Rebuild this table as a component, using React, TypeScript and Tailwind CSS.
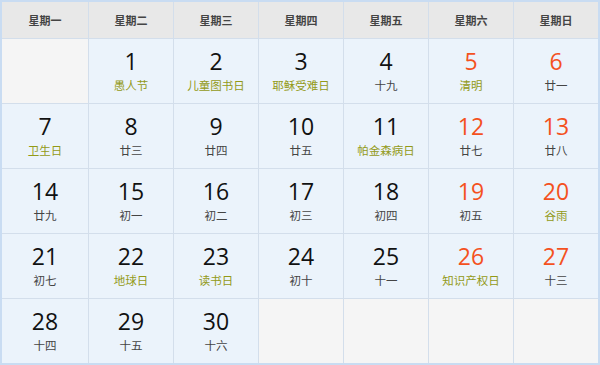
// April calendar grid — weekday header, date + lunar/festival labels.

type Day = { n: number; sub: string; holiday?: boolean; red?: boolean };

const WEEK = ["星期一", "星期二", "星期三", "星期四", "星期五", "星期六", "星期日"];

const DAYS: (Day | null)[] = [
  null,
  { n: 1, sub: "愚人节", holiday: true },
  { n: 2, sub: "儿童图书日", holiday: true },
  { n: 3, sub: "耶稣受难日", holiday: true },
  { n: 4, sub: "十九" },
  { n: 5, sub: "清明", holiday: true, red: true },
  { n: 6, sub: "廿一", red: true },
  { n: 7, sub: "卫生日", holiday: true },
  { n: 8, sub: "廿三" },
  { n: 9, sub: "廿四" },
  { n: 10, sub: "廿五" },
  { n: 11, sub: "帕金森病日", holiday: true },
  { n: 12, sub: "廿七", red: true },
  { n: 13, sub: "廿八", red: true },
  { n: 14, sub: "廿九" },
  { n: 15, sub: "初一" },
  { n: 16, sub: "初二" },
  { n: 17, sub: "初三" },
  { n: 18, sub: "初四" },
  { n: 19, sub: "初五", red: true },
  { n: 20, sub: "谷雨", holiday: true, red: true },
  { n: 21, sub: "初七" },
  { n: 22, sub: "地球日", holiday: true },
  { n: 23, sub: "读书日", holiday: true },
  { n: 24, sub: "初十" },
  { n: 25, sub: "十一" },
  { n: 26, sub: "知识产权日", holiday: true, red: true },
  { n: 27, sub: "十三", red: true },
  { n: 28, sub: "十四" },
  { n: 29, sub: "十五" },
  { n: 30, sub: "十六" },
  null,
  null,
  null,
  null,
];

const font = { fontFamily: '"Open Sans", "Noto Sans CJK SC", sans-serif' };

export default function App() {
  return (
    <div className="h-[365px] w-[600px] bg-white" style={font}>
      <div className="grid h-full w-full grid-cols-[86px_repeat(6,84px)] grid-rows-[36px_repeat(5,64px)] gap-px border-2 border-[#c9dcf2] bg-[#d3deeb]">
        {WEEK.map((w) => (
          <div
            key={w}
            className="flex items-center justify-center bg-[#e8e8e8] pt-0.5 text-[11px] font-bold text-[#444]"
          >
            {w}
          </div>
        ))}
        {DAYS.map((d, i) =>
          d ? (
            <div key={i} className="flex flex-col items-center bg-[#ebf3fb] pt-[6px]">
              <span
                className={`text-[23px] leading-[32px] ${d.red ? "text-[#f4511e]" : "text-[#111]"}`}
              >
                {d.n}
              </span>
              <span
                className={`text-[11.5px] leading-[18px] ${d.holiday ? "text-[#939a17]" : "text-[#444]"}`}
              >
                {d.sub}
              </span>
            </div>
          ) : (
            <div key={i} className="bg-[#f5f5f5]" />
          )
        )}
      </div>
    </div>
  );
}
